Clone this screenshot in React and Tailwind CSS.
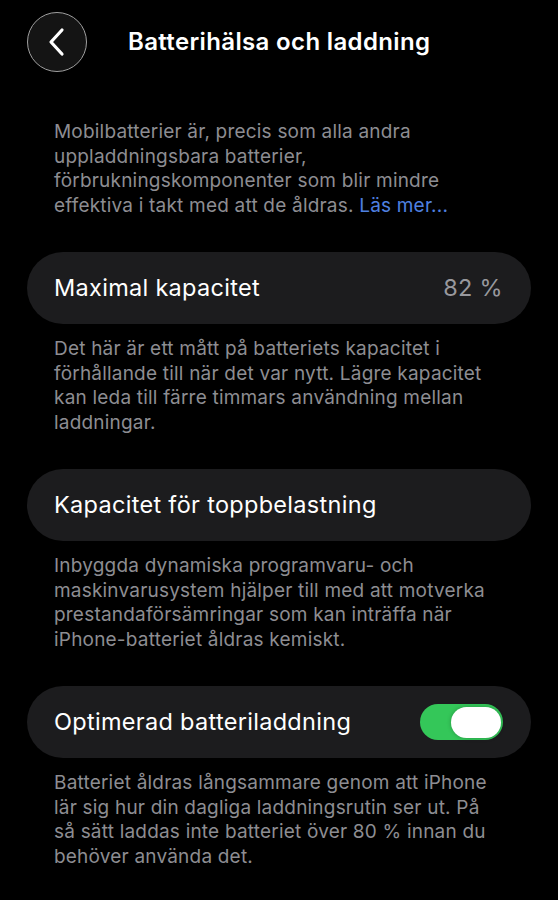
import React, { useState } from 'react';

const Row = ({ children }) => (
  <div className="mx-[27px] flex h-[72px] items-center justify-between rounded-full bg-[#1c1c1e] pl-[27px] pr-[28px]">
    {children}
  </div>
);

const Note = ({ children }) => (
  <p className="mt-[13px] px-[54px] text-[19px] leading-[24.5px] tracking-[0.2px] text-[#8d8d92]">{children}</p>
);

const App = () => {
  const [optimized, setOptimized] = useState(true);

  return (
    <div className="min-h-screen bg-black pb-10 text-white" style={{ fontFamily: 'Inter, "Noto Sans", sans-serif' }}>
      {/* Header */}
      <div className="flex items-center pl-[27px] pt-[12px]">
        <button className="flex h-[60px] w-[60px] items-center justify-center rounded-full border border-[#a0a0a0] bg-[#141414]">
          <svg width="20" height="30" viewBox="0 0 20 30" fill="none">
            <path d="M15 3 L4 15 L15 27" stroke="white" strokeWidth="3.2" strokeLinecap="round" strokeLinejoin="round" />
          </svg>
        </button>
        <h1 className="ml-[41px] text-[24px] font-semibold tracking-[0.35px]">Batterihälsa och laddning</h1>
      </div>

      <p className="mt-[48px] px-[54px] text-[19px] leading-[24.5px] tracking-[0.2px] text-[#8d8d92]">
        Mobilbatterier är, precis som alla andra uppladdningsbara batterier, förbrukningskomponenter som blir mindre effektiva i takt med att de åldras.{' '}
        <span className="text-[#4f80e0]">Läs mer...</span>
      </p>

      <div className="mt-[34px]">
        <Row>
          <span className="text-[23.5px] tracking-[0.3px]">Maximal kapacitet</span>
          <span className="text-[23.5px] tracking-[0.3px] text-[#98989d]">82 %</span>
        </Row>
        <Note>
          Det här är ett mått på batteriets kapacitet i förhållande till när det var nytt. Lägre kapacitet kan leda till färre timmars användning mellan laddningar.
        </Note>
      </div>

      <div className="mt-[34px]">
        <Row>
          <span className="text-[23.5px] tracking-[0.3px]">Kapacitet för toppbelastning</span>
        </Row>
        <Note>
          Inbyggda dynamiska programvaru- och maskinvarusystem hjälper till med att motverka prestandaförsämringar som kan inträffa när{' '}
          <span className="whitespace-nowrap">iPhone-batteriet</span> åldras kemiskt.
        </Note>
      </div>

      <div className="mt-[34px]">
        <Row>
          <span className="text-[23.5px] tracking-[0.3px]">Optimerad batteriladdning</span>
          <button
            onClick={() => setOptimized(!optimized)}
            className={`flex h-[36px] w-[83px] items-center rounded-full px-[2px] ${optimized ? 'justify-end bg-[#34c759]' : 'justify-start bg-[#39393d]'}`}
          >
            <span className="h-[31px] w-[50px] rounded-full bg-white shadow-[0_0_4px_rgba(0,0,0,0.25)]" />
          </button>
        </Row>
        <Note>
          Batteriet åldras långsammare genom att iPhone lär sig hur din dagliga laddningsrutin ser ut. På så sätt laddas inte batteriet över 80 % innan du behöver använda det.
        </Note>
      </div>
    </div>
  );
};

export default App;
